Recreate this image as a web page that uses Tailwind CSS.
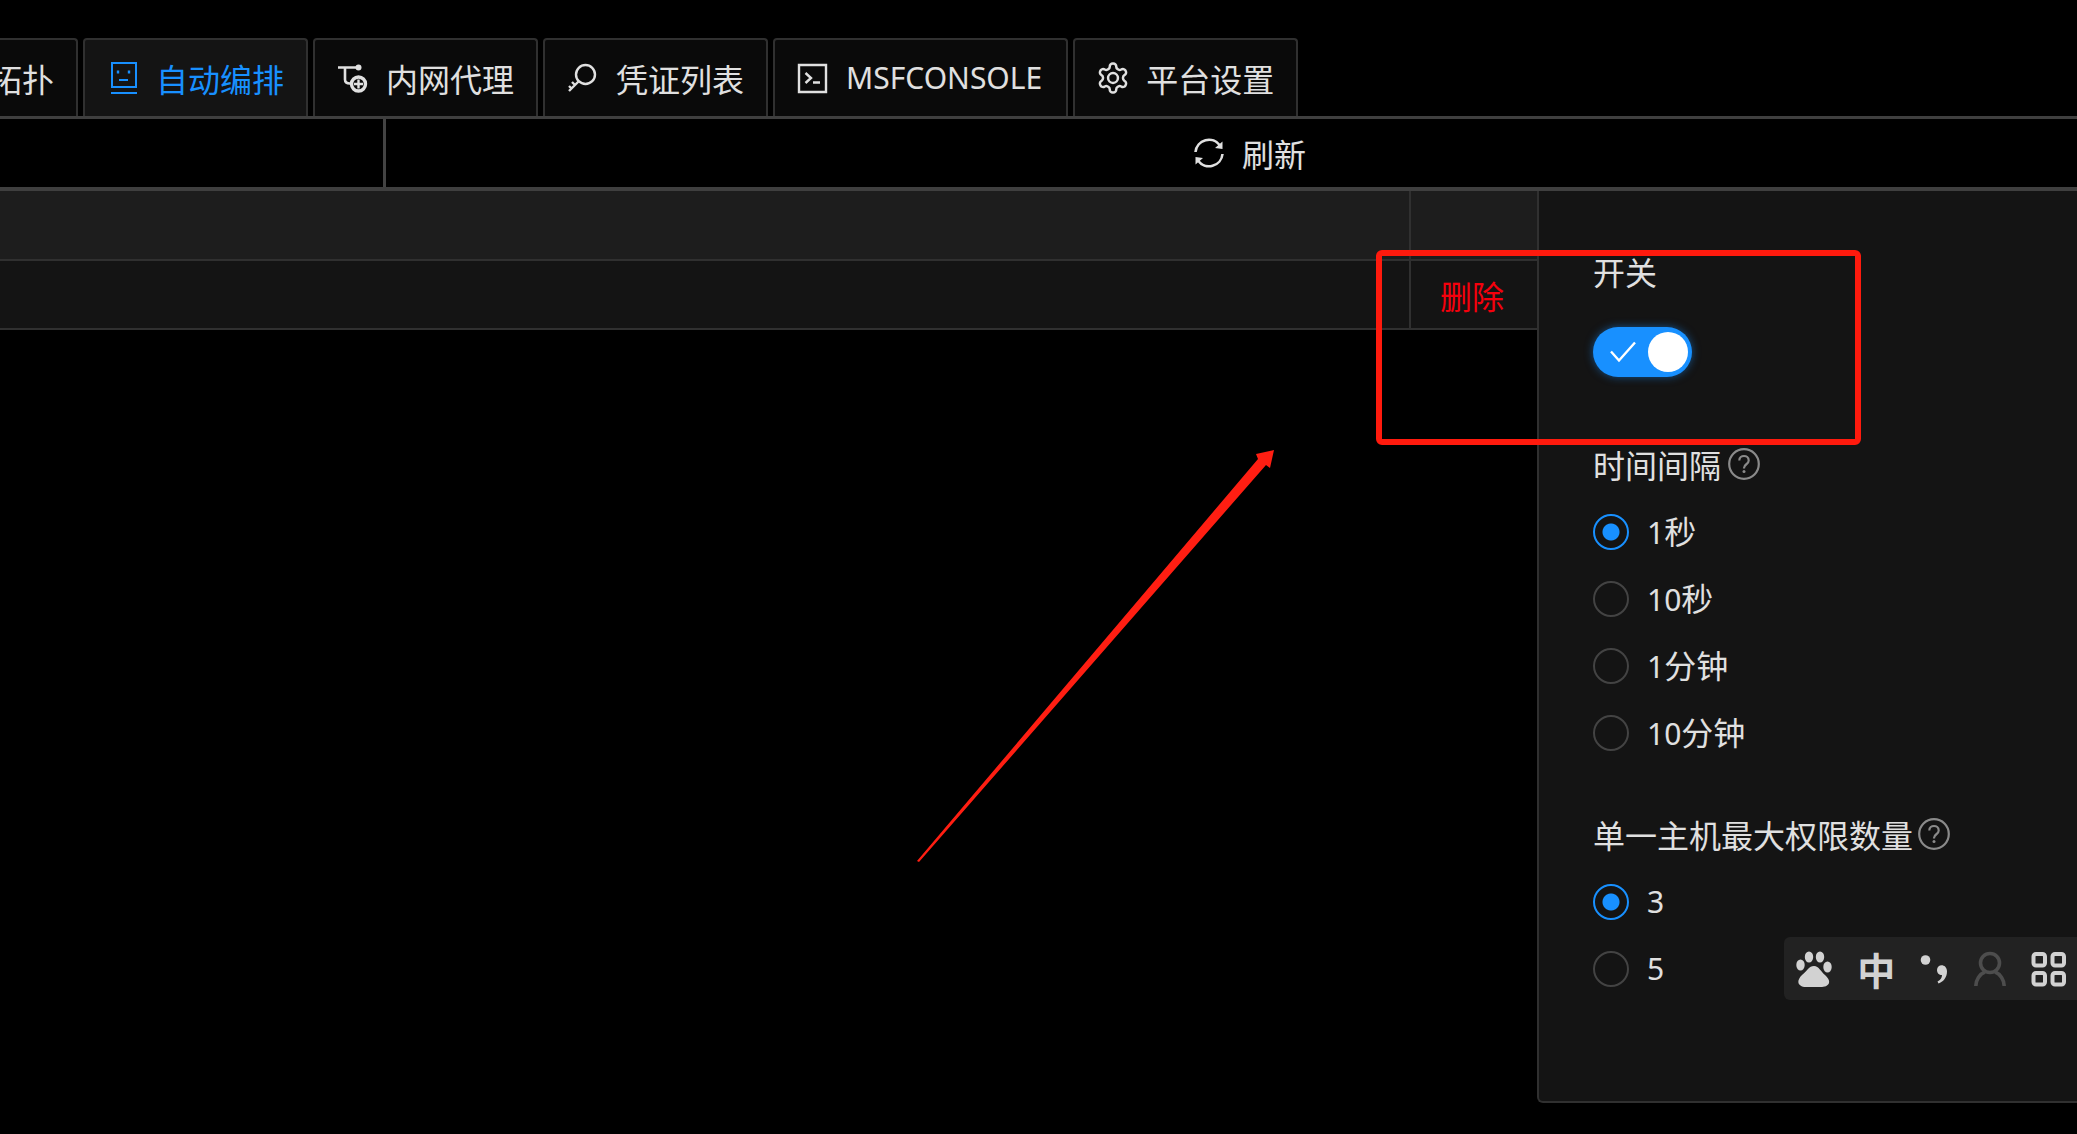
<!DOCTYPE html>
<html lang="zh-CN">
<head>
<meta charset="utf-8">
<meta name="viewport" content="width=device-width, initial-scale=1">
<title>自动编排</title>
<script src="https://cdn.jsdelivr.net/npm/@tailwindcss/browser@4"></script>
</head>
<body class="min-h-screen overflow-x-hidden bg-black font-['Noto_Sans_CJK_SC',sans-serif] text-[32px] leading-12 text-[#e0e0e0]">

<nav class="flex gap-[5px] overflow-hidden border-b-3 border-[#3f3f3f] pt-[38px] whitespace-nowrap">
  <button class="-ml-3 flex h-[78px] shrink-0 items-center rounded-t border-2 border-b-0 border-[#303030] bg-[#0a0a0a] pr-[22px]">拓扑</button>
  <button class="flex h-[78px] shrink-0 items-center gap-[17px] rounded-t border-2 border-b-0 border-[#303030] bg-[#141414] px-[22px] text-[#1890ff]">
    <svg class="size-8" viewBox="0 0 32 32" fill="none" stroke="currentColor" stroke-width="2"><path d="M5 1h24v24H5zM4 31h26"/><path d="M11 8.500v3M22 8.500v3" stroke-width="2.400"/><path d="M12 18h9"/></svg>
    <span>自动编排</span>
  </button>
  <button class="flex h-[78px] shrink-0 items-center gap-[17px] rounded-t border-2 border-b-0 border-[#303030] bg-[#0a0a0a] px-[22px]">
    <svg class="size-8" viewBox="0 0 32 32" fill="none" stroke="currentColor" stroke-width="2.600"><path d="M1 5.500h20M8 5.500v12q0 4 5 4"/><circle cx="21.500" cy="5.500" r="3" fill="currentColor" stroke="none"/><circle cx="21.500" cy="22" r="7" stroke-width="3.400"/><path d="M21.500 17.500v9M17 22h9" stroke-width="2.400"/></svg>
    <span>内网代理</span>
  </button>
  <button class="flex h-[78px] shrink-0 items-center gap-[17px] rounded-t border-2 border-b-0 border-[#303030] bg-[#0a0a0a] px-[22px]">
    <svg class="size-8" viewBox="0 0 32 32" fill="none" stroke="currentColor" stroke-width="2.400"><circle cx="18.500" cy="12.500" r="9.500"/><path d="M11.500 19.500 2 29M8 23l-3-3M4.500 26.500l-2.500-2.500"/></svg>
    <span>凭证列表</span>
  </button>
  <button class="flex h-[78px] shrink-0 items-center gap-[17px] rounded-t border-2 border-b-0 border-[#303030] bg-[#0a0a0a] pr-6 pl-[22px]">
    <svg class="size-8" viewBox="0 0 32 32" fill="none" stroke="currentColor" stroke-width="2.400"><path d="M2 3h27v27H2zM8.500 11l5.500 5-5.500 5M16 20.500h7"/></svg>
    <span class="font-['Noto_Sans',sans-serif] text-[30px]">MSFCONSOLE</span>
  </button>
  <button class="flex h-[78px] shrink-0 items-center gap-[17px] rounded-t border-2 border-b-0 border-[#303030] bg-[#0a0a0a] px-[22px]">
    <svg class="size-8" viewBox="1 1 22 22" fill="none" stroke="currentColor" stroke-width="1.700"><path d="M12.220 2h-.440a2 2 0 0 0-2 2v.180a2 2 0 0 1-1 1.730l-.430.250a2 2 0 0 1-2 0l-.150-.080a2 2 0 0 0-2.730.730l-.220.380a2 2 0 0 0 .730 2.730l.150.100a2 2 0 0 1 1 1.720v.510a2 2 0 0 1-1 1.740l-.150.090a2 2 0 0 0-.730 2.730l.220.380a2 2 0 0 0 2.730.730l.150-.080a2 2 0 0 1 2 0l.430.250a2 2 0 0 1 1 1.730V20a2 2 0 0 0 2 2h.440a2 2 0 0 0 2-2v-.180a2 2 0 0 1 1-1.730l.430-.250a2 2 0 0 1 2 0l.150.080a2 2 0 0 0 2.730-.730l.220-.390a2 2 0 0 0-.730-2.730l-.150-.080a2 2 0 0 1-1-1.740v-.500a2 2 0 0 1 1-1.740l.150-.090a2 2 0 0 0 .730-2.730l-.220-.380a2 2 0 0 0-2.730-.730l-.150.080a2 2 0 0 1-2 0l-.430-.250a2 2 0 0 1-1-1.730V4a2 2 0 0 0-2-2z"/><circle cx="12" cy="12" r="3.400"/></svg>
    <span>平台设置</span>
  </button>
</nav>

<div class="flex h-[72px] border-b-4 border-[#3f3f3f]">
  <div class="w-[383px] shrink-0"></div>
  <button class="flex grow items-center justify-center gap-[17px] border-l-3 border-[#434343] pl-9">
    <svg class="size-8" viewBox="0 0 32 32" fill="none" stroke="currentColor" stroke-width="2.600"><path d="M2.500 15A13.500 13.500 0 0 1 27 8.500M29.500 17A13.500 13.500 0 0 1 5 23.500"/><path d="M29.500 4.500v7.500l-7.500-1zM2.500 27.500V20l7.500 1z" fill="currentColor" stroke="none"/></svg>
    <span>刷新</span>
  </button>
</div>

<main class="relative flex items-start">
  <table class="min-w-0 grow table-fixed border-collapse bg-[#141414]">
    <thead>
      <tr class="h-[69px] border-b-2 border-[#303030] bg-[#1d1d1d]">
        <th></th>
        <th class="w-[127px] border-l-2 border-[#303030]"></th>
      </tr>
    </thead>
    <tbody>
      <tr class="h-[69px] border-b-2 border-[#303030]">
        <td></td>
        <td class="border-l-2 border-[#303030] p-0 pr-1 text-center"><button class="text-[#f5000c]">删除</button></td>
      </tr>
    </tbody>
  </table>

  <form class="w-[540px] shrink-0 rounded-bl-md border-b-2 border-l-2 border-[#303030] bg-[#141414] pt-14 pb-[99px] pl-[54px]">
    <label for="auto" class="block">开关</label>
    <div class="relative mt-8 flex h-[50px] w-[99px]">
      <input id="auto" type="checkbox" role="switch" checked class="size-full appearance-none rounded-full bg-[#1890ff] shadow-[0_0_8px_#1890ff80]">
      <span class="pointer-events-none absolute top-[5px] right-1 size-10 rounded-full bg-white"></span>
      <svg class="pointer-events-none absolute top-3 left-4 size-7" viewBox="0 0 28 28" fill="none" stroke="#fff" stroke-width="2.400"><path d="M2 12.500l8 9L26 3.500"/></svg>
    </div>

    <fieldset class="mt-[63px]">
      <legend class="mb-[10px] flex items-center gap-[7px]">时间间隔
        <svg class="size-8 text-[#8a8a8a]" viewBox="0 0 32 32" fill="none" stroke="currentColor" stroke-width="2.200"><circle cx="16" cy="16" r="14.800"/><path d="M11.300 12.500c0-6 9.400-6 9.400 0 0 4-4.700 3.500-4.700 7.500v.5"/><circle cx="16" cy="23.500" r="1.500" fill="currentColor" stroke="none"/></svg>
      </legend>
      <label class="flex h-[67px] items-center gap-[18px]"><input type="radio" name="interval" checked class="size-9 appearance-none rounded-full border-2 border-[#434343] checked:border-[#1890ff] checked:bg-[radial-gradient(circle,#1890ff_8px,transparent_9px)]"><span><span class="font-['Noto_Sans',sans-serif] text-[30px]">1</span>秒</span></label>
      <label class="flex h-[67px] items-center gap-[18px]"><input type="radio" name="interval" class="size-9 appearance-none rounded-full border-2 border-[#434343] checked:border-[#1890ff] checked:bg-[radial-gradient(circle,#1890ff_8px,transparent_9px)]"><span><span class="font-['Noto_Sans',sans-serif] text-[30px]">10</span>秒</span></label>
      <label class="flex h-[67px] items-center gap-[18px]"><input type="radio" name="interval" class="size-9 appearance-none rounded-full border-2 border-[#434343] checked:border-[#1890ff] checked:bg-[radial-gradient(circle,#1890ff_8px,transparent_9px)]"><span><span class="font-['Noto_Sans',sans-serif] text-[30px]">1</span>分钟</span></label>
      <label class="flex h-[67px] items-center gap-[18px]"><input type="radio" name="interval" class="size-9 appearance-none rounded-full border-2 border-[#434343] checked:border-[#1890ff] checked:bg-[radial-gradient(circle,#1890ff_8px,transparent_9px)]"><span><span class="font-['Noto_Sans',sans-serif] text-[30px]">10</span>分钟</span></label>
    </fieldset>

    <fieldset class="mt-11">
      <legend class="mb-[10px] flex items-center gap-[5px]">单一主机最大权限数量
        <svg class="size-8 text-[#8a8a8a]" viewBox="0 0 32 32" fill="none" stroke="currentColor" stroke-width="2.200"><circle cx="16" cy="16" r="14.800"/><path d="M11.300 12.500c0-6 9.400-6 9.400 0 0 4-4.700 3.500-4.700 7.500v.5"/><circle cx="16" cy="23.500" r="1.500" fill="currentColor" stroke="none"/></svg>
      </legend>
      <label class="flex h-[67px] items-center gap-[18px]"><input type="radio" name="max" checked class="size-9 appearance-none rounded-full border-2 border-[#434343] checked:border-[#1890ff] checked:bg-[radial-gradient(circle,#1890ff_8px,transparent_9px)]"><span class="font-['Noto_Sans',sans-serif] text-[30px]">3</span></label>
      <label class="flex h-[67px] items-center gap-[18px]"><input type="radio" name="max" class="size-9 appearance-none rounded-full border-2 border-[#434343] checked:border-[#1890ff] checked:bg-[radial-gradient(circle,#1890ff_8px,transparent_9px)]"><span class="font-['Noto_Sans',sans-serif] text-[30px]">5</span></label>
    </fieldset>
  </form>

  <!-- red callout frame and arrow laid over the page -->
  <div class="pointer-events-none absolute top-[59px] right-[216px] h-[195px] w-[485px] rounded-md border-6 border-[#ff1a0d]"></div>
  <svg class="pointer-events-none absolute top-[258px] right-[802px] h-[414px] w-[358px]" viewBox="0 0 358 414" fill="#ff1e12"><path d="M0 412 341 10l-2-5L357 1l-4 18-4-3L2 413z"/></svg>

  <!-- input method bar -->
  <div class="absolute top-[746px] right-0 flex h-[63px] w-[293px] items-center justify-between rounded-l-md bg-[#222] pr-[10px] pl-3 text-[#d2d2d2]">
    <svg class="size-9" viewBox="0 0 36 36" fill="currentColor"><ellipse cx="4.500" cy="14" rx="4.200" ry="5.500"/><ellipse cx="13" cy="6" rx="4.200" ry="5.500"/><ellipse cx="24" cy="6" rx="4.200" ry="5.500"/><ellipse cx="31.500" cy="16" rx="4.200" ry="5.500"/><path d="M18 15c5 0 7 6 11 9 8 7 3 12-3 12H10c-7 0-11-5-4-12 5-4 7-9 12-9z"/></svg>
    <span class="text-[38px] leading-10 font-bold">中</span>
    <svg class="h-9 w-7" viewBox="0 0 28 36" fill="currentColor"><circle cx="5.500" cy="9" r="4.800"/><path d="M17 19c0-6.500 10-6.500 10 1.500 0 6-4 10.500-8.500 12l-1-2c3-1.500 4.500-3.500 4.500-6.500-3 0-5-2-5-5z"/></svg>
    <svg class="h-9 w-8" viewBox="0 0 32 36" fill="none" stroke="#4d4d4d" stroke-width="3.600"><circle cx="16" cy="12" r="9.500"/><path d="M1.800 35c0-6 4-12 9-14M30.200 35c0-6-4-12-9-14"/></svg>
    <svg class="size-9" viewBox="0 0 36 36" fill="none" stroke="currentColor" stroke-width="4"><rect x="2.500" y="3" width="11.500" height="11.500" rx="2.500"/><rect x="21.500" y="3" width="11.500" height="11.500" rx="2.500"/><rect x="2.500" y="22" width="11.500" height="11.500" rx="2.500"/><rect x="21.500" y="22" width="11.500" height="11.500" rx="2.500"/></svg>
  </div>
</main>
</body>
</html>
